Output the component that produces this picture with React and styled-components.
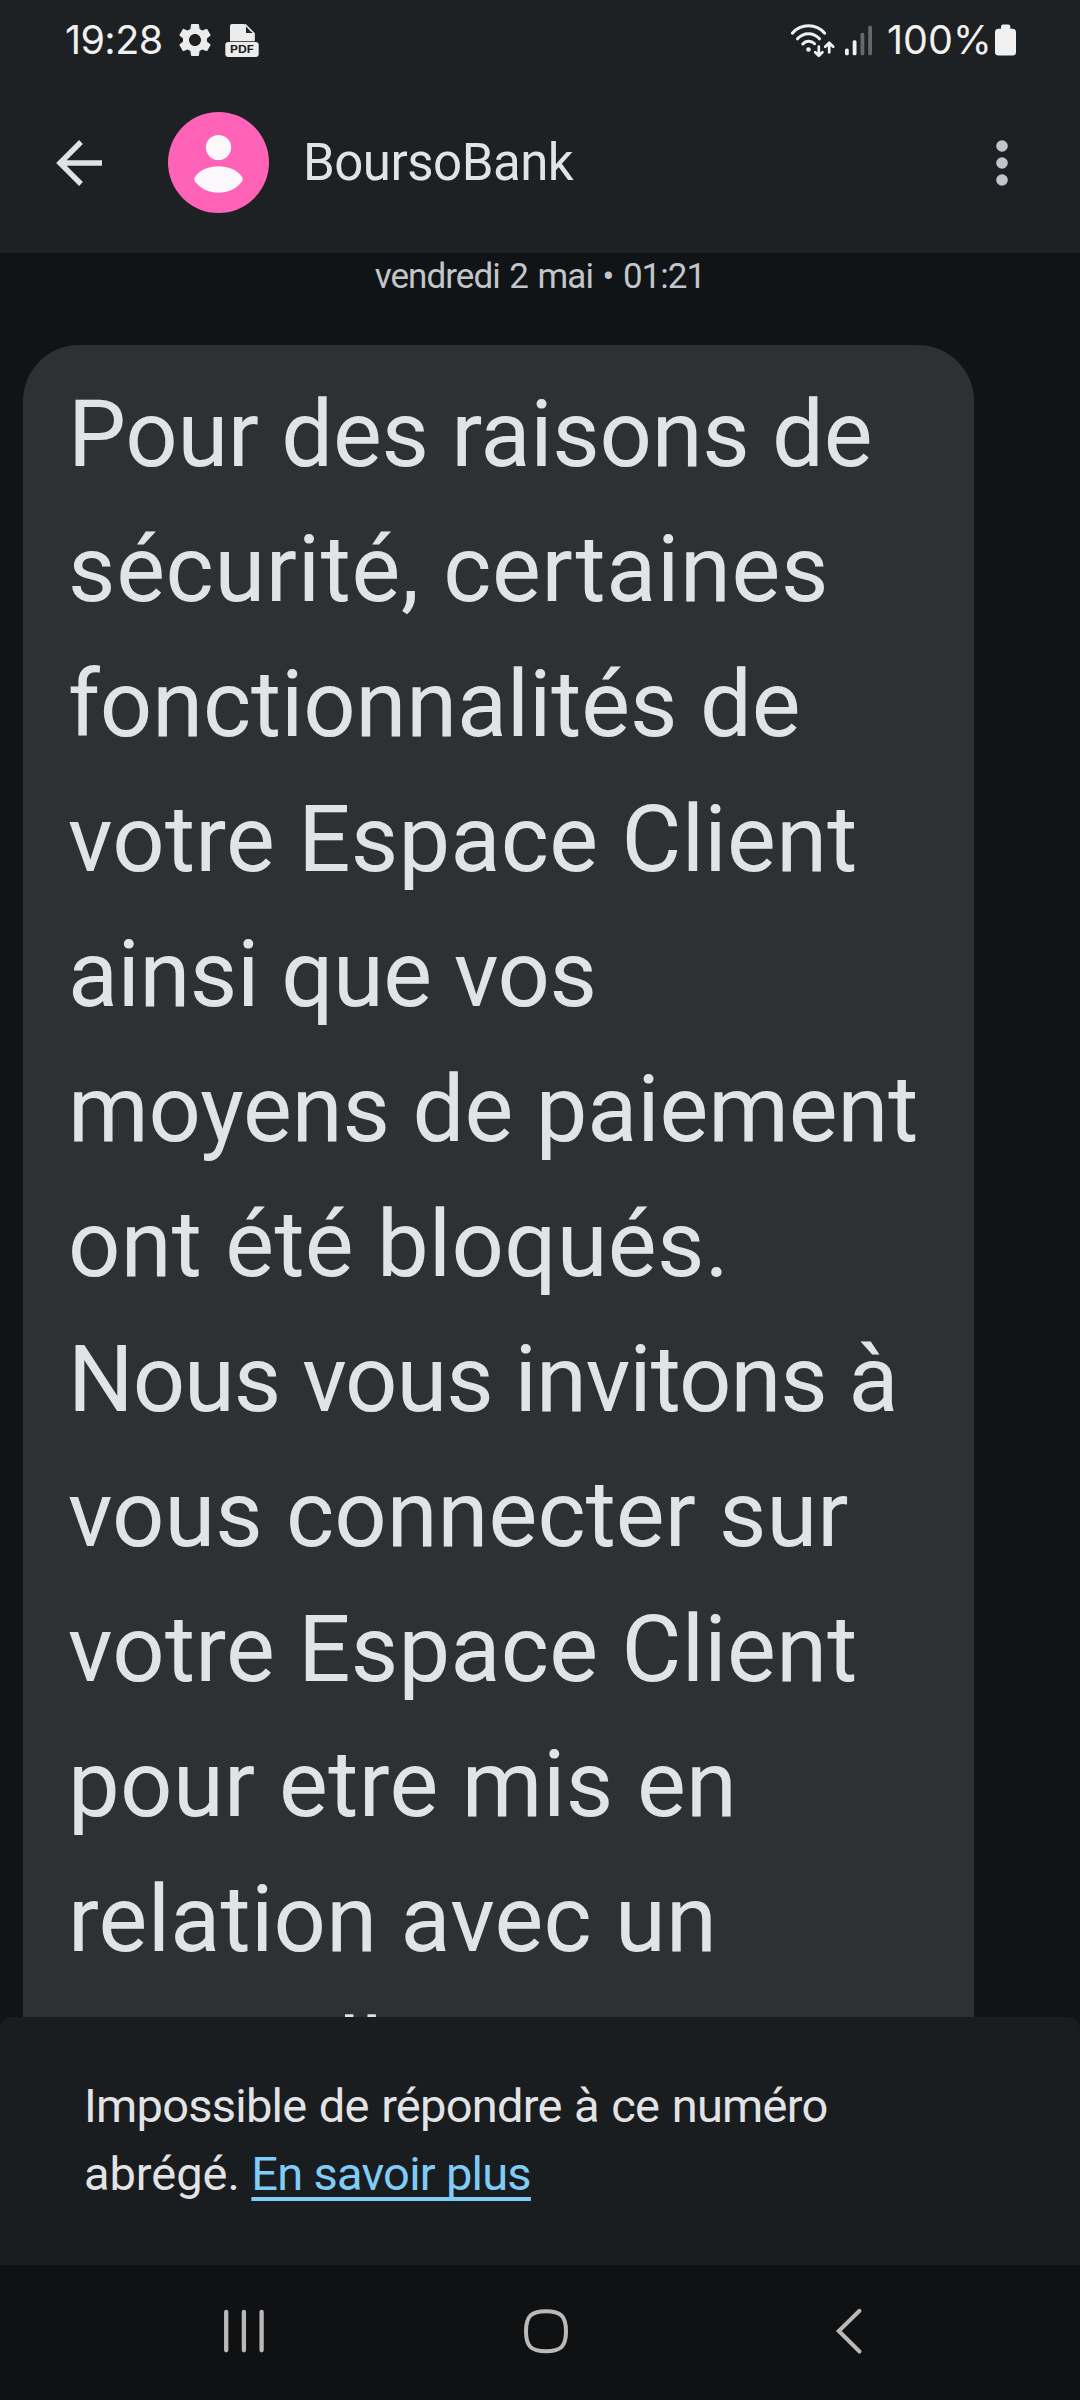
import React from 'react';
import styled, { createGlobalStyle } from 'styled-components';
import { MdSettings } from 'react-icons/md';

const GlobalStyle = createGlobalStyle`
  html, body { margin: 0; padding: 0; background: #101417; }
  *, *::before, *::after { box-sizing: border-box; }
  body { font-family: Roboto, sans-serif; -webkit-font-smoothing: antialiased; }
  svg { display: block; flex: none; }
`;

const Screen = styled.div`
  width: 1080px;
  height: 2400px;
  display: flex;
  flex-direction: column;
  overflow: hidden;
  background: #101417;
`;

const Header = styled.header`
  flex: none;
  height: 253px;
  background: #1e2123;
`;

const StatusBar = styled.div`
  display: flex;
  justify-content: space-between;
  padding: 20px 64px 0 65px;
  height: 60px;
`;

const StatusGroup = styled.div`
  display: flex;
  align-items: center;
  height: 40px;
`;

const StatusText = styled.span`
  width: ${(p) => p.$width}px;
  font-family: Inter, sans-serif;
  font-size: 39.5px;
  line-height: 40px;
  letter-spacing: ${(p) => p.$tracking || 0}px;
  white-space: nowrap;
  color: #f0f0f0;
`;

const GearSlot = styled.span`
  display: flex;
  width: 40px;
  margin-right: 9.5px;
  color: #ececec;
`;

const SignalSlot = styled.span`
  display: flex;
  margin: 0 14px 0 6px;
`;

const AppBar = styled.div`
  display: flex;
  align-items: center;
  height: 193px;
  padding: 12px 70px 0 56px;
`;

const IconButton = styled.button`
  display: flex;
  padding: 0;
  border: 0;
  background: none;
  color: ${(p) => p.$color};
`;

const Avatar = styled.div`
  width: 101px;
  height: 101px;
  margin-left: 66px;
  border-radius: 50%;
  background: #ff63b8;
`;

const Title = styled.h1`
  flex: 1;
  margin: 0 0 0 34px;
  font-size: 51px;
  font-weight: 400;
  line-height: 60px;
  letter-spacing: -0.5px;
  color: #e2e3e5;
`;

const Conversation = styled.main`
  flex: none;
  height: 1764px;
  overflow: hidden;
`;

const DateLabel = styled.div`
  margin-top: 4px;
  height: 40px;
  font-size: 35px;
  line-height: 40px;
  letter-spacing: -0.95px;
  word-spacing: 1.8px;
  text-align: center;
  color: #c2c6ca;
`;

const Bubble = styled.div`
  width: 951px;
  margin: 48px 0 0 23px;
  padding: 22px 45px 40px;
  border-radius: 56px 56px 0 0;
  background: #2e3133;
  color: #e2e3e5;
`;

const Line = styled.span`
  display: block;
  font-size: 92px;
  line-height: 135px;
  white-space: nowrap;
  letter-spacing: ${(p) => p.$tracking}px;

  &:last-child {
    margin-top: -2px;
  }
`;

const Notice = styled.section`
  flex: none;
  height: 248px;
  padding: 55px 84px 0;
  border-radius: 12px 12px 0 0;
  background: #1a1d1f;
  color: #e2e3e5;
  font-size: 47px;
  line-height: 68px;
`;

const NoticeLine = styled.div`
  letter-spacing: ${(p) => p.$tracking}px;
  word-spacing: ${(p) => p.$gap || 0}px;
  white-space: nowrap;
`;

const Link = styled.a`
  letter-spacing: -0.75px;
  color: #7fcdf7;
  text-decoration: underline;
  text-decoration-thickness: 4px;
  text-underline-offset: 7px;
  text-decoration-skip-ink: none;
`;

const NavBar = styled.nav`
  flex: none;
  display: flex;
  justify-content: space-between;
  height: 135px;
  padding: 42px 216px 0 222px;
  background: #101113;
  color: #b9b9b9;
`;

const lines = [
  ['Pour des raisons de', -0.26],
  ['sécurité, certaines', 0.67],
  ['fonctionnalités de', -0.12],
  ['votre Espace Client', 0.3],
  ['ainsi que vos', -0.45],
  ['moyens de paiement', -0.1],
  ['ont été bloqués.', 0.28],
  ['Nous vous invitons à', -0.99],
  ['vous connecter sur', 0.1],
  ['votre Espace Client', 0.3],
  ['pour etre mis en', 0.42],
  ['relation avec un', 0.27],
  ['conseiller', 0],
];

const PdfIcon = () => (
  <svg width="34" height="40" viewBox="0 0 34 40">
    <path d="M7 4h12l7 7v9.500H5V6a2 2 0 0 1 2-2z" fill="#ececec" />
    <path d="M21 6.500v6.500h6z" fill="#1e2123" />
    <path d="M20 4.200l9 9v7.300H5" fill="none" stroke="#ececec" strokeWidth="1.400" />
    <path d="M20 13h9.500v7.500H20z" fill="#ececec" />
    <rect x="0.300" y="22" width="33.400" height="15" rx="3" fill="#ececec" />
    <text x="17" y="33.200" textAnchor="middle" textLength="24" lengthAdjust="spacingAndGlyphs" fontFamily="Inter, sans-serif" fontWeight="700" fontSize="10.500" fill="#1e2123">PDF</text>
  </svg>
);

const WifiIcon = () => (
  <svg width="50" height="40" viewBox="0 0 50 40" fill="none" stroke="#f0f0f0" strokeWidth="3" strokeLinecap="round" strokeLinejoin="round">
    <path d="M3.300 13.200C12 3.400 27 3.400 35.700 13.200" />
    <path d="M8.500 18.800C14.500 12 24.500 12 30.500 18.800" />
    <path d="M13.800 24c3.200-3.700 8.400-3.700 11.800-.3" />
    <circle cx="19.500" cy="29.500" r="2.300" fill="#f0f0f0" stroke="none" />
    <path d="M29.800 26.500v9M26.200 32.200l3.600 3.600 3.600-3.600M40.200 32.500v-9M36.200 26.700l4-3.900 4 3.900" strokeWidth="2.700" />
  </svg>
);

const SignalIcon = () => (
  <svg width="28" height="40" viewBox="0 0 28 40">
    <rect x="0" y="28.500" width="3.800" height="6.700" rx="1.500" fill="#f0f0f0" />
    <rect x="7.700" y="20.300" width="3.800" height="14.900" rx="1.500" fill="#f0f0f0" />
    <rect x="15.500" y="12.800" width="3.800" height="22.400" rx="1.500" fill="#66686a" />
    <rect x="23.200" y="5.800" width="3.800" height="29.400" rx="1.500" fill="#66686a" />
  </svg>
);

const BatteryIcon = () => (
  <svg width="21" height="40" viewBox="0 0 21 40" fill="#f0f0f0">
    <rect x="6" y="4.500" width="9.300" height="8" rx="2" />
    <rect x="0" y="8.800" width="21" height="26.700" rx="3.500" />
  </svg>
);

const BackArrow = () => (
  <svg width="46" height="46" viewBox="0 0 46 46" fill="none" stroke="currentColor" strokeWidth="5.400">
    <path d="M25 2L4 23l21 21M3 23h43" />
  </svg>
);

const PersonIcon = () => (
  <svg width="101" height="101" viewBox="0 0 101 101" fill="#faf8fa">
    <circle cx="50.500" cy="35.500" r="12.600" />
    <path d="M28 63.500c4.500-5.500 13-9.200 22.500-9.200s18 3.700 22.500 9.200c2.300 2.800 2.300 4.800 0 7.300-5.500 6.500-13.500 10-22.500 10s-17-3.500-22.500-10c-2.300-2.500-2.300-4.500 0-7.300z" />
  </svg>
);

const MoreIcon = () => (
  <svg width="16" height="48" viewBox="0 0 16 48" fill="currentColor">
    <circle cx="8" cy="7" r="5.800" />
    <circle cx="8" cy="24" r="5.800" />
    <circle cx="8" cy="41" r="5.800" />
  </svg>
);

const RecentsIcon = () => (
  <svg width="44" height="50" viewBox="0 0 44 50" stroke="currentColor" strokeWidth="4.300" strokeLinecap="round">
    <path d="M4.200 5v38.300M21.900 5v38.300M39.600 5v38.300" />
  </svg>
);

const HomeIcon = () => (
  <svg width="56" height="50" viewBox="0 0 56 50" fill="none" stroke="currentColor" strokeWidth="4">
    <path d="M24 4.200c15 0 20 5 20 20s-5 20-20 20-20-5-20-20 5-20 20-20z" />
  </svg>
);

const BackIcon = () => (
  <svg width="30" height="50" viewBox="0 0 30 50" fill="none" stroke="currentColor" strokeWidth="4" strokeLinecap="round">
    <path d="M25.500 3.800L4.800 24l20.700 20.500" />
  </svg>
);

export default function App() {
  return (
    <>
      <GlobalStyle />
      <Screen>
        <Header>
          <StatusBar>
            <StatusGroup>
              <StatusText $width={110} $tracking={-0.6}>19:28</StatusText>
              <GearSlot><MdSettings size={40} /></GearSlot>
              <PdfIcon />
            </StatusGroup>
            <StatusGroup>
              <WifiIcon />
              <SignalSlot><SignalIcon /></SignalSlot>
              <StatusText $width={108}>100%</StatusText>
              <BatteryIcon />
            </StatusGroup>
          </StatusBar>
          <AppBar>
            <IconButton $color="#dfe2e5" aria-label="Retour"><BackArrow /></IconButton>
            <Avatar><PersonIcon /></Avatar>
            <Title>BoursoBank</Title>
            <IconButton $color="#c1c5ce" aria-label="Options"><MoreIcon /></IconButton>
          </AppBar>
        </Header>
        <Conversation>
          <DateLabel>vendredi 2 mai • 01:21</DateLabel>
          <Bubble>
            {lines.map(([text, tracking], i) => (
              <Line key={i} $tracking={tracking}>{text}</Line>
            ))}
          </Bubble>
        </Conversation>
        <Notice>
          <NoticeLine $tracking={-0.75} $gap={1.5}>Impossible de répondre à ce numéro</NoticeLine>
          <NoticeLine $tracking={-0.05}>abrégé. <Link>En savoir plus</Link></NoticeLine>
        </Notice>
        <NavBar>
          <RecentsIcon />
          <HomeIcon />
          <BackIcon />
        </NavBar>
      </Screen>
    </>
  );
}
